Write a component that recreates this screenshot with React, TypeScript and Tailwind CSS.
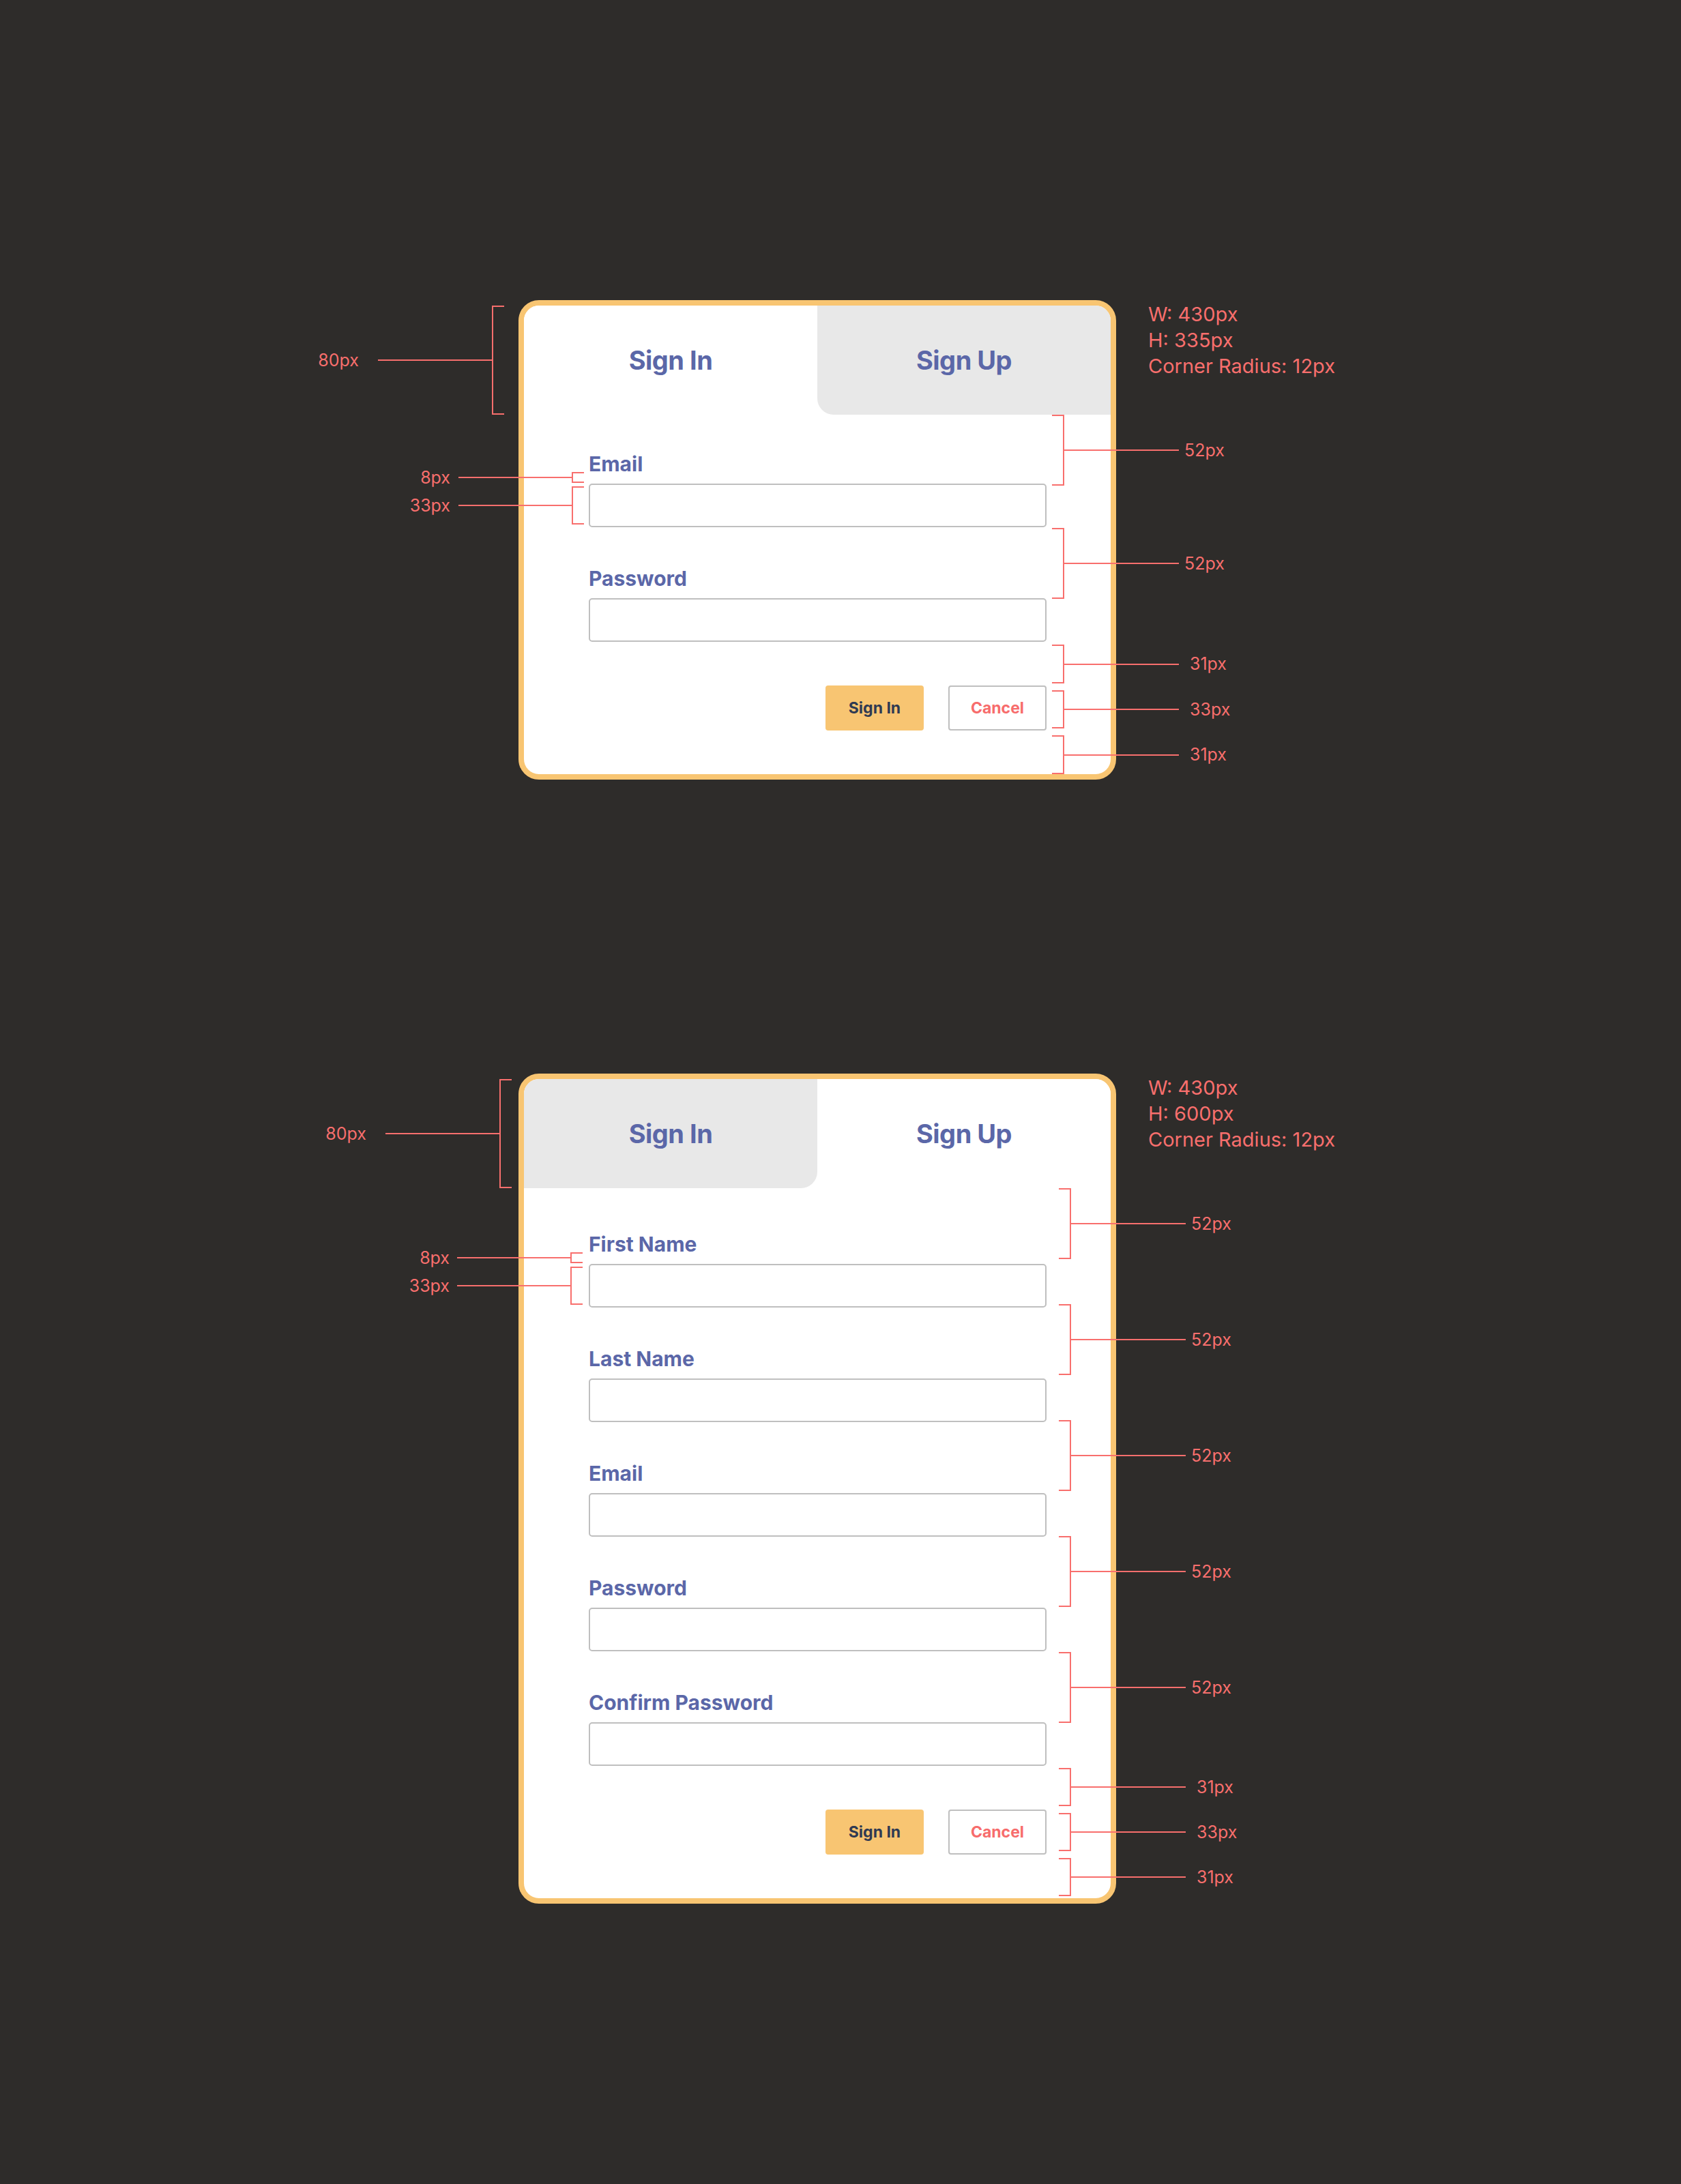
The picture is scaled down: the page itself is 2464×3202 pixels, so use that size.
import React from 'react';

type Field = { label: string };

const SIGN_IN_FIELDS: Field[] = [{ label: 'Email' }, { label: 'Password' }];
const SIGN_UP_FIELDS: Field[] = [
  { label: 'First Name' },
  { label: 'Last Name' },
  { label: 'Email' },
  { label: 'Password' },
  { label: 'Confirm Password' },
];

// ] bracket + leader line + value, for the right hand spec column
const RightMark = ({ h, label, wide }: { h: string; label: string; wide?: boolean }) => (
  <div className={`flex items-center ${h}`}>
    <div className="h-full w-[18px] border-y-2 border-r-2 border-[#f86f6d]" />
    <div className="h-[2px] w-[168px] bg-[#f86f6d]" />
    <span className={`${wide ? 'ml-[16px]' : 'ml-[8px]'} text-[25px] leading-none text-[#f86f6d]`}>{label}</span>
  </div>
);

// value + leader line + [ bracket, for the left hand spec column
const LeftMark = ({ h, label, gap, line }: { h: string; label: string; gap: string; line: string }) => (
  <div className={`flex items-center justify-end ${h}`}>
    <span className={`${gap} text-[25px] leading-none text-[#f86f6d]`}>{label}</span>
    <div className={`h-[2px] ${line} bg-[#f86f6d]`} />
    <div className="h-full w-[18px] border-y-2 border-l-2 border-[#f86f6d]" />
  </div>
);

const Info = ({ h }: { h: number }) => (
  <div className="absolute left-[923px] top-[2px] whitespace-nowrap text-[29px] leading-[38px] text-[#f86f6d]">
    <div>W: 430px</div>
    <div>H: {h}px</div>
    <div>Corner Radius: 12px</div>
  </div>
);

const Card = ({ active, fields, topPad }: { active: 'in' | 'up'; fields: Field[]; topPad: string }) => (
  <div className="w-[876px] overflow-hidden rounded-[30px] border-[8px] border-[#f8c572] bg-white">
    <div className="flex h-[160px] text-[38px] font-bold tracking-[-0.5px] text-[#5b67a8]">
      <div
        className={`flex flex-1 items-center justify-center ${
          active === 'in' ? 'bg-white' : 'rounded-br-[24px] bg-[#e8e8e8]'
        }`}
      >
        Sign In
      </div>
      <div
        className={`flex flex-1 items-center justify-center ${
          active === 'up' ? 'bg-white' : 'rounded-bl-[24px] bg-[#e8e8e8]'
        }`}
      >
        Sign Up
      </div>
    </div>
    <div className={`flex flex-col pl-[95px] pr-[94px] pb-[64px] ${topPad}`}>
      <div className="flex flex-col gap-[60px]">
        {fields.map((f) => (
          <div key={f.label} className="flex flex-col">
            <label className="mb-[14px] text-[30px] font-bold leading-[30px] text-[#5b67a8]">{f.label}</label>
            <input className="h-[64px] w-full rounded-[5px] border-2 border-[#bfbfbf] bg-white outline-none" />
          </div>
        ))}
      </div>
      <div className="mt-[64px] flex justify-end gap-[36px]">
        <button className="h-[66px] w-[144px] rounded-[4px] bg-[#f8c572] text-[23px] font-bold text-[#2f3a52]">
          Sign In
        </button>
        <button className="h-[66px] w-[144px] rounded-[4px] border-2 border-[#bfbfbf] bg-white text-[23px] font-bold text-[#f76c6c]">
          Cancel
        </button>
      </div>
    </div>
  </div>
);

export default function App() {
  return (
    <div
      className="min-h-[3202px] w-full bg-[#2e2c2a] pt-[440px]"
      style={{ fontFamily: 'Inter, "Noto Sans", sans-serif' }}
    >
      {/* Sign In spec */}
      <div className="relative ml-[760px] w-[876px]">
        <Card active="in" fields={SIGN_IN_FIELDS} topPad="pt-[57px]" />
        <Info h={335} />
        <div className="absolute right-[897px] top-[8px]">
          <LeftMark h="h-[160px]" label="80px" gap="mr-[28px]" line="w-[167px]" />
        </div>
        <div className="absolute right-[780px] top-[252px] flex flex-col gap-[5px]">
          <LeftMark h="h-[16px]" label="8px" gap="mr-[12px]" line="w-[166px]" />
          <LeftMark h="h-[56px]" label="33px" gap="mr-[12px]" line="w-[166px]" />
        </div>
        <div className="absolute left-[782px] top-[168px] flex flex-col">
          <div className="flex flex-col gap-[62px]">
            <RightMark h="h-[104px]" label="52px" />
            <RightMark h="h-[104px]" label="52px" />
          </div>
          <div className="mt-[67px] flex flex-col gap-[10px]">
            <RightMark h="h-[57px]" label="31px" wide />
            <RightMark h="h-[56px]" label="33px" wide />
            <RightMark h="h-[57px]" label="31px" wide />
          </div>
        </div>
      </div>

      {/* Sign Up spec */}
      <div className="relative ml-[760px] mt-[431px] w-[876px]">
        <Card active="up" fields={SIGN_UP_FIELDS} topPad="pt-[67px]" />
        <Info h={600} />
        <div className="absolute right-[886px] top-[8px]">
          <LeftMark h="h-[160px]" label="80px" gap="mr-[28px]" line="w-[167px]" />
        </div>
        <div className="absolute right-[782px] top-[262px] flex flex-col gap-[5px]">
          <LeftMark h="h-[16px]" label="8px" gap="mr-[11px]" line="w-[166px]" />
          <LeftMark h="h-[56px]" label="33px" gap="mr-[11px]" line="w-[166px]" />
        </div>
        <div className="absolute left-[792px] top-[168px] flex flex-col">
          <div className="flex flex-col gap-[66px]">
            {[0, 1, 2, 3, 4].map((i) => (
              <RightMark key={i} h="h-[104px]" label="52px" />
            ))}
          </div>
          <div className="mt-[66px] flex flex-col gap-[10px]">
            <RightMark h="h-[56px]" label="31px" wide />
            <RightMark h="h-[56px]" label="33px" wide />
            <RightMark h="h-[56px]" label="31px" wide />
          </div>
        </div>
      </div>
    </div>
  );
}
